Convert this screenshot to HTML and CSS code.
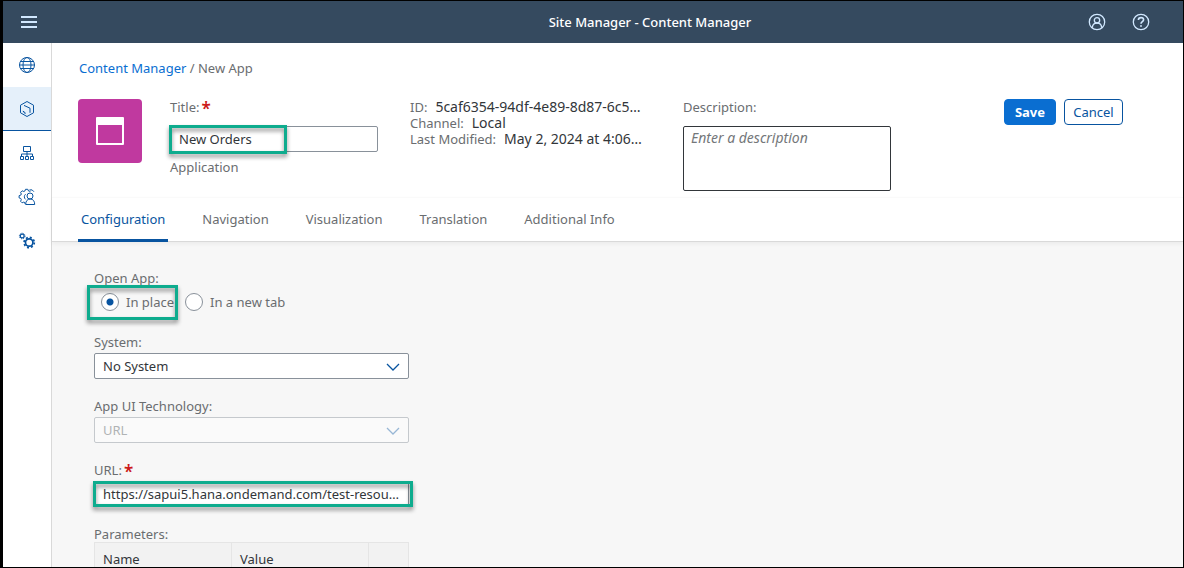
FILE: index.html
```html
<!DOCTYPE html>
<html lang="en">
<head>
<meta charset="utf-8">
<meta name="viewport" content="width=device-width, initial-scale=1">
<title>Site Manager - Content Manager</title>
<link rel="stylesheet" href="styles.css">
</head>
<body>
<div class="app">
  <header class="shell">
    <button class="shell-btn" type="button" aria-label="Menu">
      <svg width="18" height="14" viewBox="0 0 18 14"><path d="M1 2h16M1 7h16M1 12h16" stroke="#d1e8ff" stroke-width="2"/></svg>
    </button>
    <h1 class="shell-title">Site Manager - Content Manager</h1>
    <div class="shell-actions">
      <button class="shell-btn" type="button" aria-label="User">
        <svg width="18" height="18" viewBox="0 0 18 18" fill="none" stroke="#d1e8ff" stroke-width="1.3"><circle cx="9" cy="9" r="7.7"/><circle cx="9" cy="7.3" r="2.7"/><path d="M4.4 14.8c0-3 1.700-4.700 4.600-4.700s4.600 1.700 4.600 4.700"/></svg>
      </button>
      <button class="shell-btn" type="button" aria-label="Help">
        <svg width="18" height="18" viewBox="0 0 18 18" fill="none" stroke="#d1e8ff" stroke-width="1.3"><circle cx="9" cy="9" r="7.7"/><path d="M6.4 7.1c0-1.7 1.1-2.5 2.6-2.5s2.6.9 2.6 2.2c0 1.8-2.6 1.9-2.6 4" stroke-width="1.6"/><path d="M8.1 12.200h1.800v1.600H8.100z" fill="#d1e8ff" stroke="none"/></svg>
      </button>
    </div>
  </header>
  <div class="body">
    <nav class="side" aria-label="Sections">
      <a class="side-item" href="#" aria-label="Site directory">
        <svg class="side-icon" viewBox="0 0 18 18"><circle cx="9" cy="9" r="7.5"/><ellipse cx="9" cy="9" rx="4" ry="7.5"/><path d="M2.500 5.500h13M1.500 9h15M2.500 12.500h13"/></svg>
      </a>
      <a class="side-item side-item-active" href="#" aria-label="Content manager">
        <svg class="side-icon" viewBox="0 0 18 18"><path d="M9 1.500l6.500 3.700v7.600L9 16.500l-6.500-3.700V5.200z"/><path d="M6 5.400l6 2.800v4.600M4.800 11.200l1.400.6v1.200l1.600.2"/></svg>
      </a>
      <a class="side-item" href="#" aria-label="Channel manager">
        <svg class="side-icon" viewBox="0 0 18 18"><path d="M5.500 2.500h7v5h-7zM9 7.500v5M3.500 12.500v-2.500h11v2.500M2.500 12.500h3v3h-3zM7.500 12.500h3v3h-3zM12.500 12.500h3v3h-3z"/></svg>
      </a>
      <a class="side-item" href="#" aria-label="User settings">
        <svg class="side-icon" viewBox="0 0 18 18"><path d="M12.500 3.200l-1.300.1-.7-.3-.7-1.700H7.500l-.6 1.700-1.100.5-1.700-.7-1.500 1.500.7 1.700-.5 1.100-1.700.6v2.200l1.700.6.5 1.100-.7 1.700 1.500 1.500 1.700-.7 1.100.5.2 1.500M7.600 6.200a3.300 3.300 0 0 0 0 5.200M11.500 1.900h2.600l1.800 1.800"/><circle cx="12" cy="8" r="3"/><path d="M7.700 16.500c0-3.400 1.600-5.500 4.500-5.500s4.500 2.100 4.500 5.500z"/></svg>
      </a>
      <a class="side-item" href="#" aria-label="Settings">
        <svg class="side-icon" viewBox="0 0 18 18"><circle cx="11.200" cy="10.500" r="3.700" stroke-width="1.700"/><circle cx="11.200" cy="10.500" r="5.100" stroke-width="1.700" stroke-dasharray="2 2"/><circle cx="4.200" cy="4" r="1.900" stroke-width="1.200"/><circle cx="4.200" cy="4" r="2.800" stroke-width="1" stroke-dasharray="1.100 1.100"/></svg>
      </a>
    </nav>
    <main class="main">
      <section class="object">
        <nav class="crumbs" aria-label="Breadcrumb"><a class="link" href="#">Content Manager</a> / New App</nav>
        <div class="object-row">
          <div class="app-tile">
            <svg width="28" height="28" viewBox="0 0 28 28"><path fill="#fff" fill-rule="evenodd" d="M1 0h26q1 0 1 1v26q0 1-1 1H1q-1 0-1-1V1q0-1 1-1zM2 8v18h24V8z"/></svg>
          </div>
          <div class="title-col">
            <label class="label" for="title">Title:<span class="required">*</span></label>
            <div class="field"><input class="input" id="title" type="text" value="New Orders"><span class="mark mark-title"></span></div>
            <p class="kind">Application</p>
          </div>
          <dl class="meta">
            <div class="meta-row"><dt class="meta-key">ID:</dt><dd class="meta-value">5caf6354-94df-4e89-8d87-6c5…</dd></div>
            <div class="meta-row"><dt class="meta-key">Channel:</dt><dd class="meta-value">Local</dd></div>
            <div class="meta-row"><dt class="meta-key">Last Modified:</dt><dd class="meta-value">May 2, 2024 at 4:06…</dd></div>
          </dl>
          <div class="desc-col">
            <label class="label" for="desc">Description:</label>
            <textarea class="textarea" id="desc" placeholder="Enter a description"></textarea>
          </div>
          <div class="actions">
            <button class="btn btn-primary" type="button">Save</button>
            <button class="btn" type="button">Cancel</button>
          </div>
        </div>
      </section>
      <nav class="tabs" aria-label="App details">
        <a class="tab tab-active" href="#">Configuration</a>
        <a class="tab" href="#">Navigation</a>
        <a class="tab" href="#">Visualization</a>
        <a class="tab" href="#">Translation</a>
        <a class="tab" href="#">Additional Info</a>
      </nav>
      <form class="form">
        <div class="group" role="radiogroup" aria-labelledby="open-label">
          <span class="form-label" id="open-label">Open App:</span>
          <div class="radios">
            <label class="radio"><input class="radio-input" type="radio" name="open" checked>In place</label>
            <label class="radio"><input class="radio-input" type="radio" name="open">In a new tab</label>
            <span class="mark mark-radio"></span>
          </div>
        </div>
        <div class="group">
          <label class="form-label" for="system">System:</label>
          <div class="field">
            <select class="input" id="system"><option>No System</option></select>
            <svg class="chevron" viewBox="0 0 14 8"><path d="M1 1l6 6 6-6"/></svg>
          </div>
        </div>
        <div class="group">
          <label class="form-label" for="tech">App UI Technology:</label>
          <div class="field field-disabled">
            <select class="input" id="tech" disabled><option>URL</option></select>
            <svg class="chevron" viewBox="0 0 14 8"><path d="M1 1l6 6 6-6"/></svg>
          </div>
        </div>
        <div class="group">
          <label class="form-label" for="url">URL:<span class="required">*</span></label>
          <div class="field"><input class="input" id="url" type="text" value="https://sapui5.hana.ondemand.com/test-resou…"><span class="mark mark-url"></span></div>
        </div>
        <div class="group">
          <span class="form-label" id="params">Parameters:</span>
          <table class="table" aria-labelledby="params">
            <thead><tr><th class="cell">Name</th><th class="cell">Value</th><th class="cell cell-action"></th></tr></thead>
          </table>
        </div>
      </form>
    </main>
  </div>
</div>
</body>
</html>
```
FILE: styles.css
```css
* { box-sizing: border-box; }

body {
  margin: 0;
  background: #000;
  color: #32363a;
  font: 13px/16px "Noto Sans", sans-serif;
}

button, input, select, textarea { font: inherit; color: inherit; }
a { text-decoration: none; color: inherit; }

.app {
  height: 100vh;
  display: flex;
  flex-direction: column;
  overflow: hidden;
  border: 1px solid #000;
  border-left-width: 3px;
}

.shell {
  flex: none;
  height: 42px;
  padding: 0 20px 0 4px;
  display: grid;
  grid-template-columns: 1fr auto 1fr;
  align-items: center;
  background: #354a5f;
}
.shell-btn {
  width: 44px;
  height: 36px;
  padding: 0;
  display: flex;
  align-items: center;
  justify-content: center;
  border: 0;
  background: none;
}
.shell-title { margin: 0; padding-left: 130px; color: #fff; font-size: 13px; font-weight: 500; }
.shell-actions { display: flex; justify-content: flex-end; }

.body { flex: 1; min-height: 0; display: flex; background: #fff; }

.side { flex: none; width: 49px; border-right: 1px solid #d9d9d9; }
.side-item {
  height: 44px;
  display: flex;
  align-items: center;
  justify-content: center;
}
.side-item-active { background: #e5f0fa; border-bottom: 1px solid #0854a0; }
.side-icon { width: 18px; height: 18px; fill: none; stroke: #0854a0; }

.main { flex: 1; min-width: 0; display: flex; flex-direction: column; }

.object { padding: 17px 60px 6px 26px; }
.crumbs { padding-left: 1px; color: #6a6d70; }
.link { color: #0a6ed1; }
.object-row { display: flex; align-items: flex-start; margin-top: 23px; }

.app-tile {
  flex: none;
  width: 64px;
  height: 64px;
  display: flex;
  align-items: center;
  justify-content: center;
  border-radius: 4px;
  background: #c0399f;
}
.title-col { flex: none; width: 208px; margin-left: 28px; }
.label { display: block; margin-bottom: 11px; color: #6a6d70; }
.required { display: inline-block; height: 12px; margin-left: 2px; color: #cc1919; font-size: 17px; font-weight: 600; line-height: 12px; vertical-align: -3px; }
.kind { margin: 7px 0 0; color: #6a6d70; }

.field { position: relative; }
.input {
  display: block;
  width: 100%;
  height: 26px;
  padding: 0 8px;
  border: 1px solid #89919a;
  border-radius: 2px;
  background: #fff;
  appearance: none;
}
.field-disabled .input { color: #b0b3b5; border-color: #c5c9cd; background: #fafafa; opacity: 1; }
.chevron {
  position: absolute;
  top: 10px;
  right: 9px;
  width: 14px;
  height: 8px;
  fill: none;
  stroke: #0854a0;
  stroke-width: 1.3;
  pointer-events: none;
}
.field-disabled .chevron { opacity: 0.4; }

.meta { flex: none; width: 240px; margin: 0 0 0 32px; white-space: nowrap; }
.meta-row { display: flex; align-items: baseline; gap: 8px; height: 16px; }
.meta-key { color: #6a6d70; }
.meta-value { margin: 0; font-size: 14px; }

.desc-col { flex: none; width: 208px; margin-left: 33px; }
.textarea {
  display: block;
  width: 100%;
  height: 65px;
  padding: 3px 7px;
  border: 1px solid #32363a;
  border-radius: 2px;
  font-size: 14px;
  resize: none;
}
.textarea::placeholder { color: #74777a; font-style: italic; opacity: 1; }

.actions { display: flex; gap: 8px; margin-left: auto; }
.btn {
  min-width: 59px;
  height: 26px;
  padding: 0 7px;
  border: 1px solid #0854a0;
  border-radius: 4px;
  background: #fff;
  color: #0854a0;
}
.btn-primary { min-width: 52px; border-color: #0a6ed1; background: #0a6ed1; color: #fff; font-weight: 700; }

.tabs {
  position: relative;
  flex: none;
  display: flex;
  gap: 31px;
  padding: 0 26px;
  border-top: 1px solid #fafafa;
  border-bottom: 1px solid #d9d9d9;
  box-shadow: 0 2px 4px rgba(0, 0, 0, 0.05);
}
.tab { height: 43px; padding: 13px 3px 0; color: #6a6d70; }
.tab-active { height: 44px; margin-bottom: -1px; color: #0854a0; border-bottom: 3px solid #0854a0; border-radius: 2px 2px 0 0; }

.form { flex: 1; padding: 28px 42px; background: #f7f7f7; }
.group { width: 315px; height: 64px; }
.form-label { display: block; height: 19px; color: #6a6d70; }

.radios { position: relative; display: flex; gap: 11px; width: max-content; padding-left: 7px; color: #6a6d70; }
.radio { display: flex; align-items: center; gap: 7px; height: 26px; }
.radio-input {
  appearance: none;
  width: 18px;
  height: 18px;
  margin: 0;
  border: 1px solid #89919a;
  border-radius: 50%;
  background: #fff;
}
.radio-input:checked { background: radial-gradient(circle, #0854a0 3px, #fff 4px); }

.table {
  width: 100%;
  border-collapse: collapse;
  table-layout: fixed;
  border: 1px solid #e5e5e5;
  background: #f2f2f2;
}
.group .table { margin-top: -3px; }
.cell { height: 32px; padding: 0 8px; border: 1px solid #e5e5e5; font-weight: 400; text-align: left; }
.cell-action { width: 40px; }

/* Tutorial highlight frames drawn over the controls */
.mark {
  position: absolute;
  border: 3px solid #0eac8e;
  filter: drop-shadow(0 3px 2px rgba(0, 0, 0, 0.45));
  pointer-events: none;
}
.mark-title { inset: -1px 91px -2px -1px; }
.mark-radio { top: -4px; left: -7px; width: 91px; height: 35px; }
.mark-url { inset: 0 -4px 0 -1px; }
```
